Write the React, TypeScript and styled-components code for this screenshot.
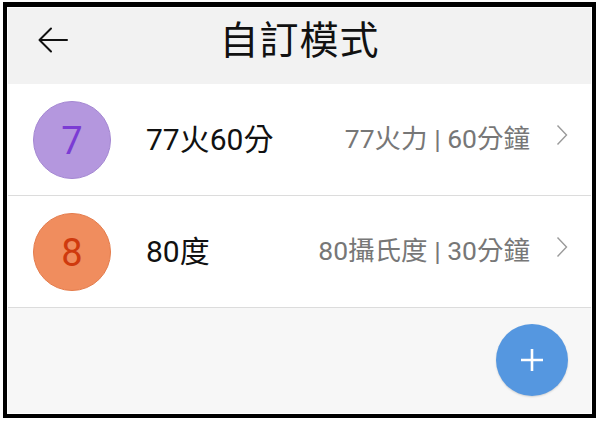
import styled, { createGlobalStyle } from "styled-components";

const GlobalStyle = createGlobalStyle`
  html, body {
    margin: 0;
    padding: 0;
    background: #fff;
  }
  body {
    font-family: Roboto, "Noto Sans CJK TC", sans-serif;
  }
`;

type Mode = {
  id: number;
  name: string;
  detail: string;
  bg: string;
  ring: string;
  fg: string;
};

const modes: Mode[] = [
  { id: 7, name: "77火60分", detail: "77火力 | 60分鐘", bg: "#b497de", ring: "#a487d2", fg: "#7b3cd4" },
  { id: 8, name: "80度", detail: "80攝氏度 | 30分鐘", bg: "#f08d5e", ring: "#e47c4c", fg: "#cf3a0e" },
];

const App = () => {
  return (
    <>
      <GlobalStyle />
      <Frame>
        <Screen>
          <Header>
            <BackButton aria-label="back">
              <svg width="32" height="28" viewBox="0 0 32 28" fill="none">
                <path
                  d="M30 14H3M14 2.5L2.5 14L14 25.5"
                  stroke="#111"
                  strokeWidth="2"
                  strokeLinecap="round"
                  strokeLinejoin="round"
                />
              </svg>
            </BackButton>
            <Title>自訂模式</Title>
          </Header>

          <List>
            {modes.map((m) => (
              <Row key={m.id}>
                <Badge $bg={m.bg} $ring={m.ring} $fg={m.fg}>
                  {m.id}
                </Badge>
                <Name>{m.name}</Name>
                <Detail>{m.detail}</Detail>
                <Chevron width="12" height="22" viewBox="0 0 12 22" fill="none">
                  <path d="M1.5 1.5L10.5 11L1.5 20.5" stroke="#9a9a9a" strokeWidth="1.4" />
                </Chevron>
              </Row>
            ))}
          </List>

          <Footer>
            <Fab aria-label="add">
              <svg width="24" height="24" viewBox="0 0 24 24" fill="none">
                <path d="M12 1V23M1 12H23" stroke="#fff" strokeWidth="2.6" />
              </svg>
            </Fab>
          </Footer>
        </Screen>
      </Frame>
    </>
  );
};

const Frame = styled.div`
  box-sizing: border-box;
  margin: 2px 0 0 3px;
  width: 593px;
  height: 416px;
  border: 4px solid #000;
  border-top-width: 5px;
  background: #fff;
  padding: 1px;
`;

const Screen = styled.div`
  display: flex;
  flex-direction: column;
  height: 100%;
  background: #f7f7f7;
`;

const Header = styled.header`
  display: flex;
  align-items: center;
  justify-content: center;
  position: relative;
  height: 76px;
  background: #f2f2f2;
`;

const BackButton = styled.button`
  position: absolute;
  left: 29px;
  top: 18px;
  display: flex;
  padding: 0;
  border: 0;
  background: none;
`;

const Title = styled.h1`
  margin: 0;
  font-family: "Noto Sans CJK TC", sans-serif;
  font-size: 39px;
  font-weight: 400;
  color: #111;
  letter-spacing: 1px;
  line-height: 1;
  margin-top: -18px;
`;

const List = styled.div`
  display: flex;
  flex-direction: column;
  background: #fff;
`;

const Row = styled.div`
  display: flex;
  align-items: center;
  height: 111px;
  padding: 0 23px 0 25px;
  border-bottom: 1px solid #dcdcdc;
`;

const Badge = styled.div<{ $bg: string; $ring: string; $fg: string }>`
  box-sizing: border-box;
  display: flex;
  align-items: center;
  justify-content: center;
  flex: none;
  width: 78px;
  height: 78px;
  border-radius: 50%;
  background: ${(p) => p.$bg};
  border: 1px solid ${(p) => p.$ring};
  color: ${(p) => p.$fg};
  font-family: Roboto, sans-serif;
  font-size: 38px;
  padding-top: 2px;
`;

const Name = styled.div`
  margin: -6px 0 0 35px;
  flex: 1;
  font-size: 30px;
  color: #111;
  font-family: Roboto, "Noto Sans CJK TC", sans-serif;
`;

const Detail = styled.div`
  margin-top: -6px;
  font-size: 26.5px;
  color: #777;
  font-family: Roboto, "Noto Sans CJK TC", sans-serif;
`;

const Chevron = styled.svg`
  margin-left: 26px;
  margin-top: -10px;
`;

const Footer = styled.div`
  flex: 1;
  display: flex;
  justify-content: flex-end;
  align-items: flex-end;
  padding: 0 23px 17px 0;
`;

const Fab = styled.button`
  display: flex;
  align-items: center;
  justify-content: center;
  width: 72px;
  height: 72px;
  border-radius: 50%;
  border: 0;
  padding: 0;
  background: #5597e0;
  box-shadow: 0 1px 2px rgba(0, 0, 0, 0.15);
`;

export default App;
